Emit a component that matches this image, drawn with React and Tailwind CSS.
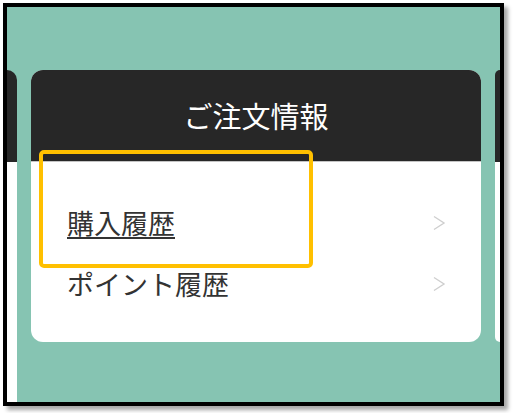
const Chevron = () => (
  <svg width="14" height="16" viewBox="0 0 14 16" fill="none" className="shrink-0">
    <polyline points="2,1.5 12,8 2,14.5" stroke="#cfcfcf" strokeWidth="1.4" strokeLinejoin="miter" />
  </svg>
);

const MenuRow = ({ label, underline }) => (
  <div className="flex h-[61px] items-center justify-between pl-[36px] pr-[35px]">
    <span className={`text-[27px] leading-none text-[#333333] ${underline ? 'underline decoration-[1.5px] underline-offset-[3px]' : ''}`}>
      {label}
    </span>
    <Chevron />
  </div>
);

const App = () => {
  return (
    <div
      className="h-[413px] w-[514px] overflow-hidden bg-white pl-[3px] pt-[3px]"
      style={{ fontFamily: '"Noto Sans CJK JP", "Noto Sans", sans-serif' }}
    >
      <div className="h-[403px] w-[501px] border-4 border-black bg-[#86c4b2] shadow-[4px_4px_4px_rgba(0,0,0,0.35)]">
        <div className="flex h-full items-start gap-[14px] pt-[63px]">
          {/* previous card, cut off */}
          <div className="flex h-[332px] w-[10px] shrink-0 flex-col overflow-hidden rounded-tr-[12px]">
            <div className="h-[92px] bg-[#272727]" />
            <div className="flex-1 bg-white" />
          </div>

          {/* main card */}
          <div className="relative w-[450px] shrink-0 overflow-hidden rounded-[12px] bg-white">
            <div className="flex h-[92px] items-center justify-center border-b border-[#c4c4c4] bg-[#272727]">
              <h2 className="text-[29px] leading-none text-white">ご注文情報</h2>
            </div>
            <div className="pb-[28px] pt-[30px]">
              <MenuRow label="購入履歴" underline />
              <MenuRow label="ポイント履歴" />
            </div>
            {/* highlight annotation */}
            <div className="absolute left-[8px] top-[80px] h-[118px] w-[274px] rounded-[5px] border-4 border-[#ffc000]" />
          </div>

          {/* next card, cut off */}
          <div className="flex h-[272px] w-[5px] shrink-0 flex-col overflow-hidden rounded-l-[8px]">
            <div className="h-[92px] bg-[#272727]" />
            <div className="flex-1 bg-white" />
          </div>
        </div>
      </div>
    </div>
  );
};

export default App;
